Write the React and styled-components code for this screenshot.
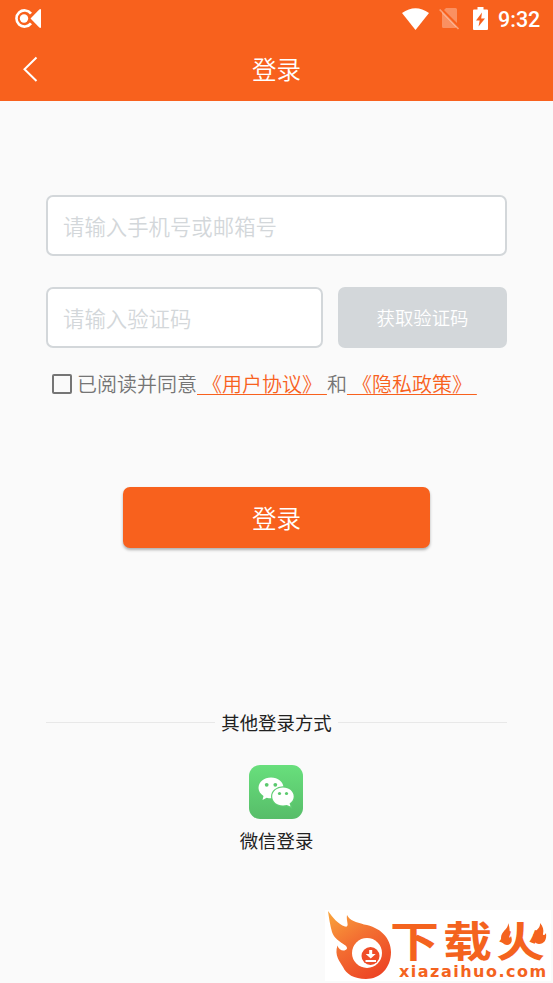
import React, { useState } from "react";
import styled, { createGlobalStyle } from "styled-components";

const GlobalStyle = createGlobalStyle`
  * {
    box-sizing: border-box;
  }
  body {
    margin: 0;
    background: #fafafa;
    font-family: "Noto Sans CJK SC", sans-serif;
  }
`;

const Container = styled.div`
  position: relative;
  display: flex;
  flex-direction: column;
  width: 553px;
  height: 983px;
  overflow: hidden;
  background: #fafafa;
`;

const Header = styled.header`
  height: 101px;
  background: #f8611d;
  color: white;
`;

const StatusBar = styled.div`
  display: flex;
  align-items: center;
  height: 37px;
  padding: 0 12px 0 15px;
`;

const StatusIcons = styled.div`
  display: flex;
  align-items: center;
  margin-left: auto;
`;

const Clock = styled.span`
  width: 43px;
  margin-left: 10px;
  padding-top: 2px;
  font-family: Roboto, sans-serif;
  font-size: 21.5px;
  font-weight: 500;
  line-height: 24px;
  white-space: nowrap;
`;

const NavBar = styled.div`
  display: grid;
  grid-template-columns: 60px 1fr 60px;
  align-items: center;
  height: 64px;
`;

const BackButton = styled.button`
  display: flex;
  padding: 0 0 0 22px;
  border: 0;
  background: none;
  color: white;
`;

const Title = styled.h1`
  margin: 0;
  font-size: 24.5px;
  font-weight: 350;
  line-height: 36px;
  text-align: center;
`;

const Form = styled.form`
  display: flex;
  flex-direction: column;
  padding: 94px 46px 0;
`;

const Row = styled.div`
  display: flex;
  gap: 15px;
  margin-top: 31px;
`;

const Input = styled.input`
  appearance: none;
  width: ${(props) => props.$width};
  height: 61px;
  padding: 0 15px 1px;
  border: 2px solid #d3d7da;
  border-radius: 7px;
  outline: none;
  background: white;
  font-family: inherit;
  font-size: 21.4px;
  font-weight: 350;

  &::placeholder {
    color: #d3d7da;
    opacity: 1;
  }
`;

const CodeButton = styled.button`
  flex: 1;
  height: 61px;
  padding: 0 0 1px;
  border: 0;
  border-radius: 7px;
  background: #d3d7da;
  color: white;
  font-family: inherit;
  font-size: 18.4px;
  font-weight: 350;
`;

const Agreement = styled.label`
  display: flex;
  align-items: center;
  height: 30px;
  margin-top: 21px;
  padding-left: 6px;
  color: #757575;
  font-size: 20px;
  font-weight: 350;
  line-height: 30px;
  white-space: pre;
  word-spacing: 0.5px;
`;

const Checkbox = styled.input`
  appearance: none;
  flex: none;
  width: 20px;
  height: 20px;
  margin: 0 5px 1px 0;
  border: 2px solid #757575;
  border-radius: 2px;

  &:checked {
    background: #f8611d;
  }
`;

const Link = styled.span`
  color: #f8611d;
  text-decoration: underline;
  text-decoration-thickness: 1px;
  text-decoration-skip-ink: none;
  text-underline-offset: 2px;
`;

const LoginButton = styled.button`
  align-self: center;
  width: 307px;
  height: 61px;
  margin-top: 88px;
  padding: 0;
  border: 0;
  border-radius: 7px;
  background: #f8611d;
  box-shadow: 0 2px 3px rgba(0, 0, 0, 0.3);
  color: white;
  font-family: inherit;
  font-size: 24.5px;
  font-weight: 350;
`;

const Divider = styled.div`
  display: flex;
  align-items: center;
  gap: 6px;
  margin: 161px 46px 0;
  color: #212121;
  font-size: 18.4px;
  line-height: 27px;

  &::before,
  &::after {
    content: "";
    flex: 1;
    height: 1px;
    background: #e8e8e8;
  }
`;

const WechatLogin = styled.div`
  display: flex;
  flex-direction: column;
  align-items: center;
  gap: 8px;
  margin: 29px 0 0;
  color: #212121;
  font-size: 18.4px;
  line-height: 27px;
`;

// Sits over the bottom right corner of the screen
const Watermark = styled.div`
  position: absolute;
  right: 2px;
  bottom: 2px;
  display: flex;
  width: 226px;
  height: 71px;
  padding-left: 2px;
  background: white;
  color: #f4631e;
`;

const Brand = styled.div`
  position: relative;
  flex: 1;
`;

const BrandName = styled.div`
  height: 54px;
  padding-top: 8px;
  font-size: 49px;
  font-weight: 700;
  letter-spacing: 4px;
  line-height: 46px;
  white-space: nowrap;
  transform: translate(-2px, -1px) scaleY(0.85);
`;

const BrandUrl = styled.div`
  height: 17px;
  padding-left: 7px;
  font-family: "DejaVu Sans", sans-serif;
  font-size: 16px;
  font-weight: 700;
  letter-spacing: 1.5px;
  line-height: 16px;
  white-space: nowrap;
`;

const Flames = styled.svg`
  position: absolute;
  top: 12px;
  left: 107px;
`;

const Logo = styled.svg`
  flex: none;
`;

function RecorderIcon() {
  return (
    <svg width="27" height="20" viewBox="0 0 27 20">
      <path d="M16 4.600A8.100 8.100 0 1 0 16 14.400" fill="none" stroke="white" strokeWidth="2.600" />
      <circle cx="9" cy="9.500" r="4.200" fill="white" />
      <path d="M15.500 9.500L24.300.4Q26-.5 26 1v17q0 1.500-1.700.600Z" fill="white" />
    </svg>
  );
}

function WifiIcon() {
  return (
    <svg width="27" height="22" viewBox="0 0 27 22">
      <path d="M0 5Q13.500-4.500 27 5L13.500 22Z" fill="white" />
    </svg>
  );
}

const SimSvg = styled.svg`
  margin-left: 10px;
`;

function NoSimIcon() {
  return (
    <SimSvg width="21" height="23" viewBox="0 0 21 23">
      <path d="M7 1h9.500q1.500 0 1.500 1.500V16L5 3ZM3 5l14.500 15q-.5 1-1.500 1H4.500Q3 21 3 19.500Z" fill="white" opacity=".3" />
      <path d="M.7 2.500L19.500 22" stroke="white" strokeWidth="1.700" opacity=".4" />
    </SimSvg>
  );
}

const BatterySvg = styled.svg`
  margin-left: 13px;
`;

function BatteryIcon() {
  return (
    <BatterySvg width="15" height="23" viewBox="0 0 15 23">
      <path d="M4.500 0h6v2.500H14q1 0 1 1V22q0 1-1 1H1q-1 0-1-1V3.500q0-1 1-1h3.500Z" fill="white" />
      <path d="M9 5.500L3 13.500h3.700L5.500 19.500 12 11.500H8.200Z" fill="#f8611d" />
    </BatterySvg>
  );
}

function BackIcon() {
  return (
    <svg width="16" height="26" viewBox="0 0 16 26">
      <path d="M14.500 1.500L2.500 13.300l12 11.700" fill="none" stroke="currentColor" strokeWidth="2" />
    </svg>
  );
}

function WechatIcon() {
  return (
    <svg width="54" height="54" viewBox="0 0 54 54">
      <defs>
        <linearGradient id="wechat" x1="0" y1="0" x2="0" y2="1">
          <stop offset="0" stopColor="#68df7c" />
          <stop offset="1" stopColor="#57bd69" />
        </linearGradient>
      </defs>
      <rect width="54" height="54" rx="11" fill="url(#wechat)" />
      <path d="M22 12.500c7 0 12.500 4.600 12.500 10.500S29 33.300 22 33.300c-1.500 0-3-.2-4.300-.6L13.500 35l1-4.100c-3-2-5-4.600-5-7.900 0-5.900 5.500-10.500 12.500-10.500Z" fill="white" />
      <path d="M34 22.500c6.100 0 10.700 3.900 10.700 8.900 0 2.900-1.600 5.300-4.100 7l.9 3.200-3.700-1.700c-1.200.3-2.500.5-3.800.5-6.100 0-10.800-4-10.800-9s4.700-8.900 10.800-8.900Z" fill="white" stroke="#61cf74" strokeWidth="2.400" paintOrder="stroke" />
      <g fill="#5bc96e">
        <circle cx="17.700" cy="19.800" r="1.900" />
        <circle cx="26.300" cy="19.800" r="1.900" />
        <circle cx="30.500" cy="28.500" r="1.600" />
        <circle cx="37.500" cy="28.500" r="1.600" />
      </g>
    </svg>
  );
}

const WechatButton = styled.button`
  display: flex;
  margin-right: 1px;
  padding: 0;
  border: 0;
  background: none;
`;

function FlameLogo() {
  return (
    <Logo width="65" height="71" viewBox="0 0 65 71">
      <defs>
        <linearGradient id="flame" x1=".1" y1="0" x2=".7" y2="1">
          <stop offset="0" stopColor="#f9a13b" />
          <stop offset=".45" stopColor="#f37032" />
          <stop offset="1" stopColor="#ed4524" />
        </linearGradient>
      </defs>
      <path d="M1 1C6 8 11 14 18 16.500c2 .5 3-.5 2.500-3C20 10 19.500 8 20 5c3 6 9 7 17 9.500C53 17 64 28 64 42 64 58 53 69 39 69 27 69 19 64 16 57 13 52 7 45 10.500 35.500 12 41 18 42 20 38.500 21 34 9 33 5 22 3 15 2 8 1 1Z" fill="url(#flame)" />
      <circle cx="40" cy="43" r="15" fill="white" />
      <circle cx="43.500" cy="46" r="9" fill="#ef4d28" />
      <path d="M42.200 40h3v4h3.500L43.700 48.500 38.700 44h3.500ZM38.500 50H49v2H38.500Z" fill="white" />
    </Logo>
  );
}

function App() {
  const [agreed, setAgreed] = useState(false);

  return (
    <Container>
      <GlobalStyle />
      <Header>
        <StatusBar>
          <RecorderIcon />
          <StatusIcons>
            <WifiIcon />
            <NoSimIcon />
            <BatteryIcon />
            <Clock>9:32</Clock>
          </StatusIcons>
        </StatusBar>
        <NavBar>
          <BackButton>
            <BackIcon />
          </BackButton>
          <Title>登录</Title>
        </NavBar>
      </Header>

      <Form onSubmit={(e) => e.preventDefault()}>
        <Input $width="100%" type="text" placeholder="请输入手机号或邮箱号" />
        <Row>
          <Input $width="277px" type="text" placeholder="请输入验证码" />
          <CodeButton type="button">获取验证码</CodeButton>
        </Row>
        <Agreement>
          <Checkbox
            type="checkbox"
            checked={agreed}
            onChange={(e) => setAgreed(e.target.checked)}
          />
          <span>
            已阅读并同意<Link> 《用户协议》 </Link>和<Link> 《隐私政策》 </Link>
          </span>
        </Agreement>
        <LoginButton>登录</LoginButton>
      </Form>

      <Divider>其他登录方式</Divider>
      <WechatLogin>
        <WechatButton>
          <WechatIcon />
        </WechatButton>
        微信登录
      </WechatLogin>

      <Watermark>
        <FlameLogo />
        <Brand>
          <BrandName>下载火</BrandName>
          <Flames width="52" height="26" viewBox="0 0 52 26">
            <g fill="#f4631e">
              <path d="M9 1c1 6-7 8-7 15 0 4 3 7 6 7 4 0 6-4 4-9-1 2-2 2-2 0 1-4 1-9-1-13Z" />
              <path d="M41 1c1 6-7 8-7 14 0 4 3 7 6 7 5 0 8-4 7-11-1 2-3 3-3 1 1-4 0-8-3-11Z" />
            </g>
          </Flames>
          <BrandUrl>xiazaihuo.com</BrandUrl>
        </Brand>
      </Watermark>
    </Container>
  );
}

export default App;
